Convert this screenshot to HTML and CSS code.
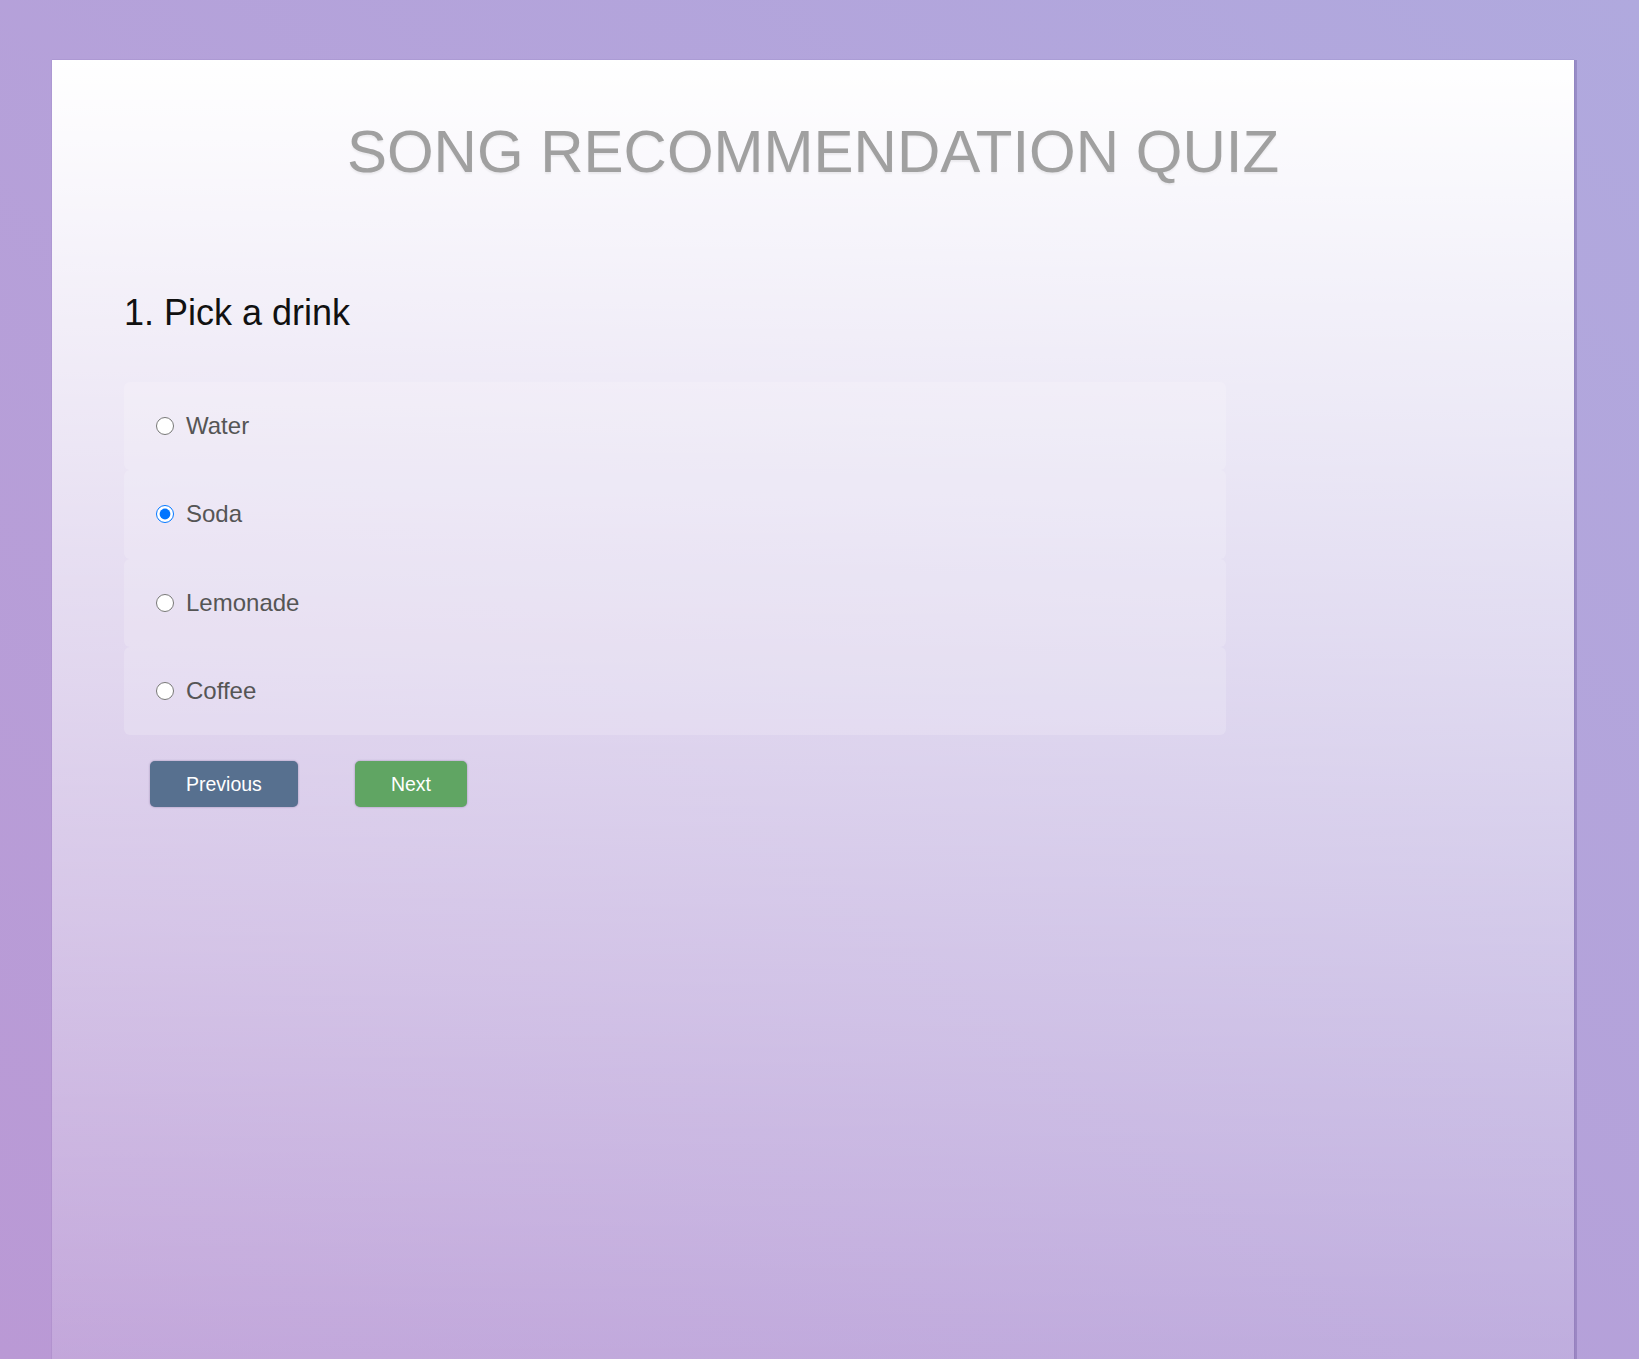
FILE: index.html
```html
<!DOCTYPE html>
<html lang="en">
<head>
<meta charset="utf-8">
<title>Song Recommendation Quiz</title>
<link rel="stylesheet" href="styles.css">
</head>
<body>
<main class="quiz">
  <h1 class="quiz-title">SONG RECOMMENDATION QUIZ</h1>
  <section class="question">
    <h2 class="question-title">1. Pick a drink</h2>
    <div class="options">
      <label class="option"><input type="radio" name="drink" value="water"><span>Water</span></label>
      <label class="option"><input type="radio" name="drink" value="soda" checked><span>Soda</span></label>
      <label class="option"><input type="radio" name="drink" value="lemonade"><span>Lemonade</span></label>
      <label class="option"><input type="radio" name="drink" value="coffee"><span>Coffee</span></label>
    </div>
    <div class="actions">
      <button class="btn btn-prev" type="button">Previous</button>
      <button class="btn btn-next" type="button">Next</button>
    </div>
  </section>
</main>
</body>
</html>
```

FILE: styles.css
```css
html {
  min-height: 100%;
  background: linear-gradient(to top right, #ba99d5, #b0a9de);
}

body {
  margin: 0;
  padding-top: 60px;
  min-height: 100vh;
  box-sizing: border-box;
  font-family: "Liberation Sans", Arial, sans-serif;
  overflow: hidden;
}

.quiz {
  margin-left: 52px;
  width: 1522px;
  min-height: 1299px;
  box-sizing: border-box;
  padding: 57px 72px 40px;
  background: linear-gradient(to bottom, rgba(255, 255, 255, 1), rgba(255, 255, 255, 0.13));
  box-shadow: 3px 0 0 rgba(90, 70, 140, 0.28), 0 0 1px rgba(60, 40, 100, 0.35);
}

.quiz-title {
  margin: 0;
  text-align: center;
  font-size: 60px;
  font-weight: normal;
  color: #a0a0a0;
  text-shadow: 0 2px 2px rgba(0, 0, 0, 0.06);
}

.question-title {
  margin: 106px 0 0;
  font-size: 36px;
  font-weight: normal;
  color: #111;
}

.options {
  margin-top: 48px;
  width: 80%;
}

.option {
  display: flex;
  align-items: center;
  height: 88.3px;
  box-sizing: border-box;
  padding: 0 32px;
  border-radius: 6px;
  background: rgba(255, 255, 255, 0.18);
  font-size: 24px;
  color: #555;
}

.option input {
  width: 18px;
  height: 18px;
  margin: 0 12px 0 0;
}

.actions {
  display: flex;
  gap: 57px;
  margin-top: 26px;
  padding-left: 26px;
}

.btn {
  height: 46px;
  padding: 0 36px;
  border: none;
  border-radius: 5px;
  font-family: "Liberation Sans", Arial, sans-serif;
  font-size: 19.5px;
  color: #fff;
  box-shadow: 0 0 2px rgba(60, 40, 90, 0.45);
  cursor: pointer;
}

.btn-prev {
  background: #57708f;
}

.btn-next {
  background: #60a563;
}
```
